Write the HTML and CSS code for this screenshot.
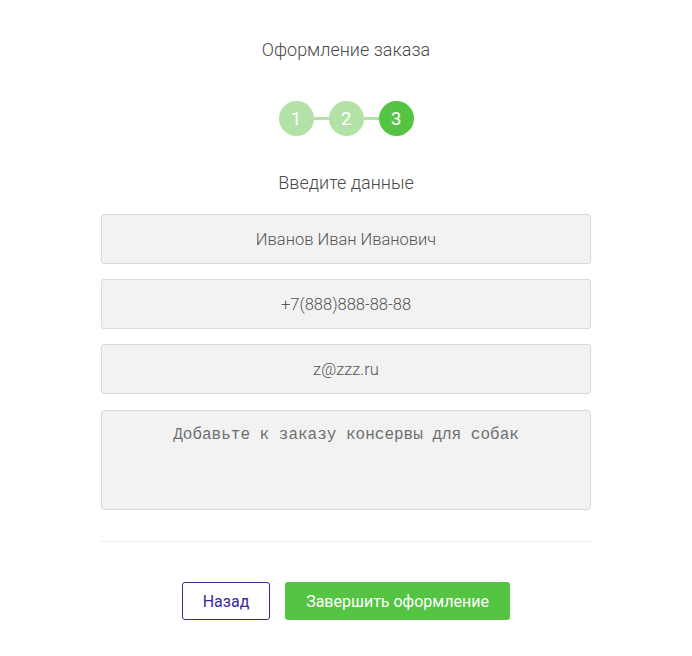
FILE: index.html
```html
<!DOCTYPE html>
<html lang="ru">
<head>
    <meta charset="UTF-8">
    <meta name="viewport" content="width=device-width, initial-scale=1.0">
    <title>Оформление заказа</title>
    <link rel="stylesheet" href="styles.css">
</head>
<body>
    <div class="checkout">
        <h2 class="checkout-title">Оформление заказа</h2>

        <div class="steps">
            <div class="step done">1</div>
            <div class="step-line"></div>
            <div class="step done">2</div>
            <div class="step-line"></div>
            <div class="step active">3</div>
        </div>

        <h3 class="form-title">Введите данные</h3>

        <form class="order-form">
            <input class="field" type="text" value="Иванов Иван Иванович">
            <input class="field" type="text" value="+7(888)888-88-88">
            <input class="field" type="text" value="z@zzz.ru">
            <textarea class="field comment">Добавьте к заказу консервы для собак</textarea>
        </form>

        <div class="divider"></div>

        <div class="actions">
            <button class="btn btn-back" type="button">Назад</button>
            <button class="btn btn-finish" type="button">Завершить оформление</button>
        </div>
    </div>
</body>
</html>
```

FILE: styles.css
```css
body {
    margin: 0;
    padding: 0;
    background: #fff;
    font-family: Roboto, "Liberation Sans", Arial, sans-serif;
    color: #555;
}
.checkout {
    width: 490px;
    margin: 0 auto;
    padding-top: 38px;
    display: flex;
    flex-direction: column;
    align-items: center;
}
.checkout-title {
    margin: 0;
    font-size: 18px;
    font-weight: 300;
    line-height: 24px;
    color: #4a4a4a;
}
.steps {
    margin-top: 39px;
    display: flex;
    align-items: center;
}
.step {
    width: 35px;
    height: 35px;
    border-radius: 50%;
    display: flex;
    align-items: center;
    justify-content: center;
    color: #fff;
    font-size: 19px;
}
.step.done {
    background: #b2e2a6;
}
.step.active {
    background: #55c443;
}
.step-line {
    width: 15px;
    height: 3px;
    background: #b2e2a6;
}
.form-title {
    margin: 35px 0 0;
    font-size: 18px;
    font-weight: 300;
    line-height: 24px;
    color: #4a4a4a;
}
.order-form {
    width: 100%;
    margin-top: 19px;
    display: flex;
    flex-direction: column;
    gap: 15px;
}
.field {
    box-sizing: border-box;
    width: 100%;
    height: 50px;
    margin: 0;
    border: 1px solid #d9d9d9;
    border-radius: 3px;
    background: #f2f2f2;
    font-family: Roboto, "Liberation Sans", Arial, sans-serif;
    font-size: 16.5px;
    font-weight: 300;
    color: #555;
    text-align: center;
    outline: none;
}
.comment {
    height: 100px;
    margin-top: 1px;
    padding: 15px 10px;
    resize: none;
    font-family: "Liberation Mono", "Courier New", monospace;
    font-size: 16px;
    font-weight: 400;
    color: #6e6e6e;
}
.divider {
    width: 100%;
    height: 1px;
    margin-top: 31px;
    background: #ececec;
}
.actions {
    margin-top: 40px;
    display: flex;
    gap: 15px;
}
.btn {
    height: 38px;
    border-radius: 3px;
    font-family: Roboto, "Liberation Sans", Arial, sans-serif;
    font-size: 16px;
    cursor: pointer;
}
.btn-back {
    width: 88px;
    background: #fff;
    border: 1px solid #3c2a9c;
    color: #3c2a9c;
}
.btn-finish {
    width: 225px;
    background: #55c443;
    border: none;
    color: #fff;
}
```
